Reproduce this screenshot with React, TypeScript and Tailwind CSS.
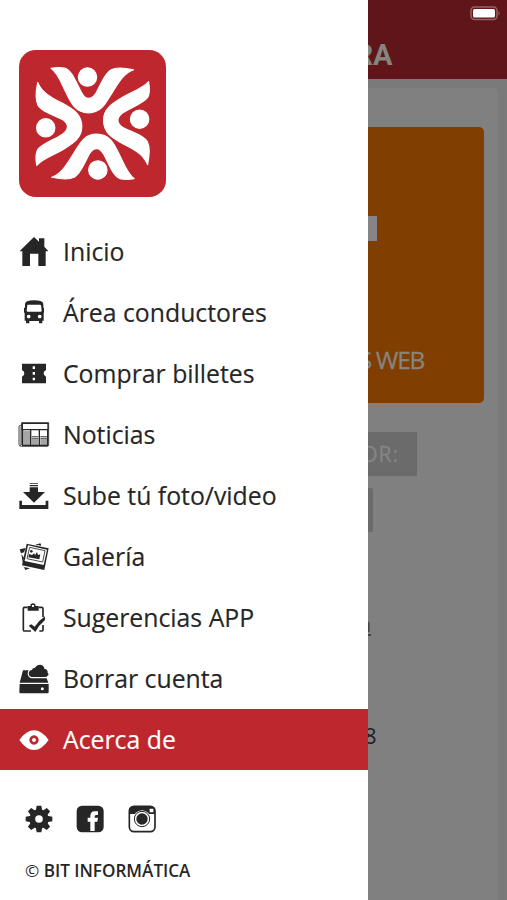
import type { ReactNode } from "react";

const Limbs = () => (
  <>
    <path d="M123 83Q145 79 163 82C185 87 196 122 214 155Q224 173 235 173Q248 173 258 156C275 122 287 96 303 87Q322 77 370 87C340 98 324 127 307 154C286 188 274 216 235 216C196 216 183 187 167 154C151 122 144 98 123 83Z" />
    <path d="M415 123Q421 158 411 171C397 188 362 200 338 216Q323 227 323 238Q323 250 338 260C368 275 400 283 411 302Q422 324 412 371C398 338 370 325 339 309C306 291 280 276 280 238C280 202 310 186 338 169C370 151 398 143 415 123Z" />
    <circle cx="232" cy="109" r="27.500" />
    <circle cx="388" cy="235" r="27.500" />
  </>
);

const Logo = () => (
  <svg viewBox="27 28 440 440" className="h-[147px] w-[147px]">
    <rect x="27" y="28" width="440" height="440" rx="50" fill="#be272d" />
    <g fill="#fff" stroke="#fff" strokeWidth="3.500" strokeLinejoin="round">
      <Limbs />
      <g transform="rotate(180 247.500 248)"><Limbs /></g>
    </g>
  </svg>
);

const Icon = ({ box, children }: { box: string; children: ReactNode }) => (
  <svg viewBox={box} className="h-10 w-10 shrink-0" fill="currentColor">{children}</svg>
);

const items: { label: string; icon: ReactNode }[] = [
  {
    label: "Inicio",
    icon: (
      <Icon box="12 21 120 120">
        <path d="M72 36L87 50V40H103V65L114 77V79H107V123H85V86H60V123H37V79H30V77Z" />
      </Icon>
    ),
  },
  {
    label: "Área conductores",
    icon: (
      <Icon box="12 204 120 120">
        <path fillRule="evenodd" d="M45 236Q48 226 72 226Q97 226 100 236V248H102V263H101V287H97V295H87V288H58V295H48V287H44V263H42V248H45ZM53 239Q52 239 52 241L50 257Q50 260 53 260H92Q95 260 95 257L93 241Q92 239 90 239ZM56 269a5.500 5.500 0 1 0 .1 0ZM89 269a5.500 5.500 0 1 0 .1 0Z" />
      </Icon>
    ),
  },
  {
    label: "Comprar billetes",
    icon: (
      <Icon box="12 12 120 120">
        <path d="M36 41H108V61Q101 62 101 70Q101 78 108 80V100H36V80Q43 78 43 70Q43 62 36 61Z" />
        <path fill="#fff" d="M68 49h7v8h-7zM68 66h7v8h-7zM68 83h7v8h-7z" />
      </Icon>
    ),
  },
  {
    label: "Noticias",
    icon: (
      <Icon box="12 195 120 120">
        <path d="M37 226H30Q27 227 27 231V283Q27 289 34 289H111Q116 289 116 284V218H35V281Q35 286 31 286" fill="none" stroke="currentColor" strokeWidth="2.500" />
        <path fill="none" stroke="currentColor" strokeWidth="4" d="M37 220H114V239H37ZM38 240V286H113V240M62 240V286M88 240V286" />
        <path fill="none" stroke="currentColor" strokeWidth="2.500" d="M41 246H60M41 252H60M41 258H60M41 264H60M41 270H60M41 276H60M41 282H60M65 260H85M65 265H85M65 270H85M65 276H85M65 282H85M91 260H111M91 265H111M91 270H111M91 276H111M91 282H111" />
        <path stroke="currentColor" strokeWidth="1.500" d="M31 230V286" />
      </Icon>
    ),
  },
  {
    label: "Sube tú foto/video",
    icon: (
      <Icon box="12 3 120 120">
        <path d="M59 24H84V26.500H59zM59 30H84V34H59zM59 37H84V51H105L72 83L39 51H59ZM28 77H36V90H107V77H115V102H28Z" />
      </Icon>
    ),
  },
  {
    label: "Galería",
    icon: (
      <Icon box="12 186 120 120">
        <path d="M47 219L29 223L33 235L42 232ZM34 237L42 248L38 262ZM35 263L41 276L60 280L46 285Z" />
        <path d="M76 209L91 205L94 211L89 213L88 210L81 211Z" />
        <path fillRule="evenodd" d="M50 206L116 220L103 285L36 271ZM54 211L44 258L101 270L111 224Z" />
        <path fill="none" stroke="currentColor" strokeWidth="2.500" d="M59 217L105 227L98 261L51 251Z" />
        <path d="M55 247L57 237L66 240L73 235L75 241L81 231L84 240L91 238L88 253Z" />
        <circle cx="64" cy="229" r="4" />
      </Icon>
    ),
  },
  {
    label: "Sugerencias APP",
    icon: (
      <Icon box="12 9 120 120">
        <path d="M53 37H43Q40 37 40 41V104Q40 108 44 108H63M86 37H95Q99 37 99 41V66M99 90V104Q99 108 95 108H88" fill="none" stroke="currentColor" strokeWidth="5" />
        <path fillRule="evenodd" d="M53 33H61Q61 25 69 25Q77 25 77 33H86V47H53ZM69 29a3.500 3.500 0 1 0 .1 0Z" />
        <path d="M56 92L64 88L74 95Q86 77 105 64L105 75Q87 90 76 111Z" />
      </Icon>
    ),
  },
  {
    label: "Borrar cuenta",
    icon: (
      <Icon box="12 192 120 120">
        <path d="M39 226H56Q53 230 53 237Q55 249 66 250H110L115 263H29ZM29 267H116V291Q116 295 112 295H31Q28 295 28 291Z" />
        <path d="M64 246Q56 243 56 235Q57 226 66 225Q67 218 74 219Q80 209 91 209Q102 211 103 221Q114 222 113 234Q119 238 112 243Q111 246 105 246Z" />
        <circle cx="97" cy="281" r="4.500" fill="#fff" />
      </Icon>
    ),
  },
  {
    label: "Acerca de",
    icon: (
      <Icon box="42 60 120 120">
        <path fillRule="evenodd" d="M58 120Q79 91 102 91Q125 91 146 120Q125 150 102 150Q79 150 58 120ZM102 106a14 14 0 1 0 .1 0ZM102 114a6 6 0 1 1-.1 0Z" />
      </Icon>
    ),
  },
];

const Gear = () => (
  <svg viewBox="44 46 84 84" className="h-7 w-7" fill="#262626">
    <g transform="translate(86 88)">
      {[0, 45, 90, 135].map((a) => (
        <path key={a} transform={`rotate(${a})`} d="M-7-40H7L10-24V24L7 40H-7L-10 24V-24Z" />
      ))}
      <circle r="29" />
      <circle r="11.500" fill="#fff" />
    </g>
  </svg>
);

const Facebook = () => (
  <svg viewBox="198 46 84 84" className="h-7 w-7">
    <rect x="200" y="48" width="81" height="80" rx="16" fill="#262626" />
    <path fill="#fff" d="M241 124V96H233V84H241V78Q242 65 254 65H264V76H258Q254 77 254 81V84H264L262 96H254V124Z" />
  </svg>
);

const Instagram = () => (
  <svg viewBox="352 46 84 84" className="h-7 w-7">
    <rect x="356" y="50" width="77" height="76" rx="14" fill="#fff" stroke="#262626" strokeWidth="5" />
    <path fill="#262626" d="M356 73V63Q356 50 370 50H420Q433 50 433 63V73Z" />
    <rect x="417" y="57" width="11" height="11" rx="2" fill="#fff" />
    <circle cx="394" cy="88" r="26" fill="#fff" />
    <circle cx="394" cy="88" r="23" fill="none" stroke="#262626" strokeWidth="3" />
    <circle cx="394" cy="88" r="17" fill="#262626" />
  </svg>
);

export default function App() {
  return (
    <div className="flex h-[900px] w-[507px] overflow-hidden bg-[#7a7a7a] font-['Open_Sans','Noto_Sans',sans-serif]">
      <aside className="relative z-10 flex w-[367.500px] shrink-0 flex-col bg-white text-[#262626]">
        <div className="h-[221.200px] pl-[19px] pt-[49.500px]"><Logo /></div>
        <nav>
          {items.map((item, i) => (
            <div
              key={item.label}
              className={`flex h-[61px] items-center gap-[9px] pl-[14px] text-[24.800px] leading-none ${i === 8 ? "bg-[#be272d] text-white" : ""}`}
            >
              {item.icon}
              <span className="whitespace-nowrap [-webkit-text-stroke:0.150px_currentColor]">{item.label}</span>
            </div>
          ))}
        </nav>
        <div className="mt-[34.800px] flex gap-[23.500px] pl-[24.500px]">
          <Gear /><Facebook /><Instagram />
        </div>
        <p className="mt-[26px] pl-[25px] text-[17.100px] font-semibold leading-[24px]">
          <span className="font-normal">©</span> BIT INFORMÁTICA
        </p>
      </aside>

      <main className="flex w-[139.500px] shrink-0 flex-col">
        <header className="h-[79px] bg-[#5f1519]">
          <div className="flex h-[39px] justify-end pr-[6px] pt-[6px]">
            <svg viewBox="0 0 31 15" className="h-[15px] w-[31px]">
              <rect x="1" y="1" width="26" height="12.500" rx="3.500" fill="none" stroke="#976265" strokeWidth="1.500" />
              <rect x="3" y="3" width="22" height="8.500" rx="1.500" fill="#fff" />
              <path d="M28.500 5Q31 7.200 28.500 9.500Z" fill="#976265" />
            </svg>
          </div>
          <div className="flex h-[32px] w-[25px] justify-end whitespace-nowrap font-['Roboto'] text-[29px] font-bold leading-[32px] text-[#858580]">
            RA
          </div>
        </header>
        <section className="mt-[9px] flex w-[130.500px] flex-1 flex-col rounded-tr-[5px] bg-[#808080]">
          <div className="mt-[38.500px] flex h-[276px] w-[116.500px] flex-col rounded-r-[5px] bg-[#803e00]">
            <div className="mt-[89px] h-[25px] w-[9px] bg-[#858585]" />
            <div className="mt-[103px] flex h-[32px] w-[56.500px] justify-end whitespace-nowrap text-[24.500px] leading-[32px] tracking-[-1.300px] text-[#858580] [-webkit-text-stroke:0.300px_currentColor]">
              S WEB
            </div>
          </div>
          <div className="mt-[29px] flex h-[44px] w-[49.500px] items-center justify-end whitespace-nowrap bg-[#6b6b6b] pr-[18px] pt-[3px] text-[21px] tracking-[1px] text-[#858585] [-webkit-text-stroke:0.300px_currentColor]">
            OR:
          </div>
          <div className="mt-[12px] h-[44px] w-[5px] rounded-r-[2px] bg-[#6b6b6b]" />
          <div className="mt-[79px] flex h-[28px] w-[3.500px] justify-end text-[20px] leading-[28px] text-[#444] underline underline-offset-2">a</div>
          <div className="mt-[80px] flex h-[32px] w-[9px] justify-end text-[22px] leading-[32px] text-[#202020]">8</div>
        </section>
      </main>
    </div>
  );
}
